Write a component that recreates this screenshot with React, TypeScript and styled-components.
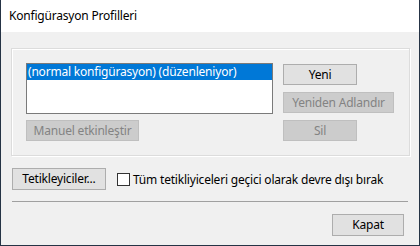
import styled, { createGlobalStyle } from "styled-components";

const GlobalStyle = createGlobalStyle`
  html, body {
    margin: 0;
    padding: 0;
    background: #f0f0f0;
  }
  * {
    box-sizing: border-box;
  }
`;

const Window = styled.div`
  width: 420px;
  height: 246px;
  display: flex;
  flex-direction: column;
  border: 1px solid #253345;
  border-top: none;
  background: #f0f0f0;
  font-family: "Noto Sans", "Liberation Sans", sans-serif;
  font-size: 12px;
  letter-spacing: -0.2px;
  color: #000;
`;

const TitleBar = styled.div`
  height: 32px;
  flex-shrink: 0;
  background: #fff;
  display: flex;
  align-items: center;
  padding-left: 8px;
  padding-bottom: 1px;
`;

const Body = styled.div`
  flex: 1;
  display: flex;
  flex-direction: column;
  padding: 16px 9px 0 10px;
`;

const GroupBox = styled.div`
  height: 108px;
  border: 1px solid #dcdcdc;
  box-shadow: inset 1px 1px 0 #fff, 1px 1px 0 #fff;
  display: flex;
  gap: 10px;
  padding: 14px 0 0 14px;
`;

const Column = styled.div<{ $gap: number }>`
  display: flex;
  flex-direction: column;
  align-items: flex-start;
  gap: ${(p) => p.$gap}px;
`;

const ListBox = styled.div`
  width: 247px;
  height: 51px;
  background: #fff;
  border: 1px solid #7a7a7a;
  padding: 0;
`;

const ListItem = styled.div<{ $selected?: boolean }>`
  height: 16px;
  line-height: 15px;
  padding-left: 1px;
  white-space: nowrap;
  background: ${(p) => (p.$selected ? "#0078d7" : "transparent")};
  color: ${(p) => (p.$selected ? "#fff" : "#000")};
`;

const Button = styled.button<{ $w: number; $h?: number; $top?: number }>`
  width: ${(p) => p.$w}px;
  height: ${(p) => p.$h ?? 21}px;
  margin: ${(p) => p.$top ?? 0}px 0 0;
  padding: 0 0 1px;
  font: inherit;
  letter-spacing: inherit;
  white-space: nowrap;
  background: #e1e1e1;
  border: 1px solid #adadad;
  color: #000;
  border-radius: 0;
  &:disabled {
    background: #cccccc;
    border-color: #bfbfbf;
    color: #838383;
  }
`;

const BottomRow = styled.div`
  display: flex;
  align-items: center;
  gap: 11px;
  margin-top: 12px;
  padding-left: 1px;
`;

const CheckLabel = styled.label`
  display: flex;
  align-items: center;
  gap: 3px;
  white-space: nowrap;
`;

const CheckBox = styled.span`
  width: 13px;
  height: 13px;
  border: 1px solid #333;
  background: #fff;
`;

const Separator = styled.div`
  height: 1px;
  background: #a0a0a0;
  margin: 11px 2px 0 1px;
`;

const Footer = styled.div`
  display: flex;
  justify-content: flex-end;
  margin-top: 12px;
  padding-right: 6px;
`;

export default function App() {
  return (
    <>
      <GlobalStyle />
      <Window>
        <TitleBar>Konfigürasyon Profilleri</TitleBar>
        <Body>
          <GroupBox>
            <Column $gap={6}>
              <ListBox>
                <ListItem $selected>(normal konfigürasyon) (düzenleniyor)</ListItem>
              </ListBox>
              <Button $w={113} disabled>
                Manuel etkinleştir
              </Button>
            </Column>
            <Column $gap={7}>
              <Button $w={74} $top={1}>
                Yeni
              </Button>
              <Button $w={111} disabled>
                Yeniden Adlandır
              </Button>
              <Button $w={74} disabled>
                Sil
              </Button>
            </Column>
          </GroupBox>
          <BottomRow>
            <Button $w={94} $h={22}>
              Tetikleyiciler...
            </Button>
            <CheckLabel>
              <CheckBox />
              Tüm tetikliyiceleri geçici olarak devre dışı bırak
            </CheckLabel>
          </BottomRow>
          <Separator />
          <Footer>
            <Button $w={72} $h={22}>
              Kapat
            </Button>
          </Footer>
        </Body>
      </Window>
    </>
  );
}
